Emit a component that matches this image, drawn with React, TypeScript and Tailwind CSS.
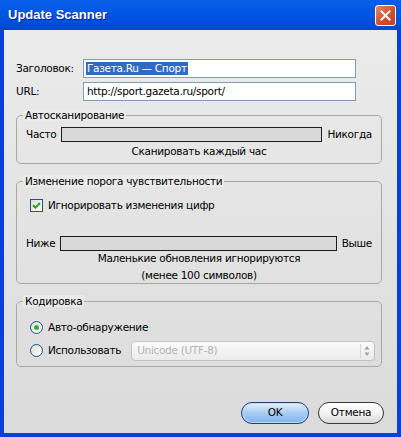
import React from "react";

const font = { fontFamily: '"DejaVu Sans", "Liberation Sans", sans-serif' };

function Slider({ className }: { className: string }) {
  return <div className={"h-[15px] border border-[#1e1e1e] bg-[#d9d9d9] " + className} />;
}

function Group({ title, children, className }: { title: string; children: React.ReactNode; className?: string }) {
  return (
    <fieldset className={"mx-[12px] mr-[15px] rounded-[5px] border border-[#a9a9a4] " + (className || "")}>
      <legend className="ml-[6px] bg-[#ebebeb] px-[2px] leading-[12px]">{title}</legend>
      {children}
    </fieldset>
  );
}

export default function App() {
  return (
    <div
      className="flex h-[437px] w-[401px] flex-col overflow-hidden bg-[#0840d8] text-[10.5px] tracking-[-0.3px] text-black"
      style={font}
    >
      {/* Title bar */}
      <div className="flex h-[30px] items-center justify-between bg-gradient-to-b from-[#0a5ee8] via-[#0055e5] to-[#0046d0] pl-[8px] pr-[5px]">
        <span
          className="text-[13px] font-bold tracking-normal text-white"
          style={{ fontFamily: '"Liberation Sans", sans-serif', textShadow: "1px 1px 0 #0a1e8a" }}
        >
          Update Scanner
        </span>
        <div className="mt-[1px] flex h-[21px] w-[21px] items-center justify-center rounded-[3px] border border-white bg-gradient-to-br from-[#e9876a] via-[#d9502f] to-[#c23e1f]">
          <svg width="11" height="11" viewBox="0 0 11 11">
            <path d="M1.5 1.5 L9.5 9.5 M9.5 1.5 L1.5 9.5" stroke="white" strokeWidth="2" strokeLinecap="square" />
          </svg>
        </div>
      </div>

      {/* Body */}
      <div className="mx-[4px] mb-[4px] flex flex-1 flex-col bg-gradient-to-b from-[#ebebeb] to-[#dcdbdb] pt-[29px]">
        <div className="flex items-center">
          <span className="w-[79px] pl-[12px]">Заголовок:</span>
          <div className="flex h-[19px] w-[273px] items-center border border-[#7f9db9] bg-white pl-[2px]">
            <span className="bg-[#316ac5] px-[1px] text-white leading-[13px]">Газета.Ru — Спорт</span>
          </div>
        </div>
        <div className="mt-[4px] flex items-center">
          <span className="w-[79px] pl-[12px]">URL:</span>
          <div className="flex h-[19px] w-[273px] items-center border border-[#7f9db9] bg-white pl-[3px]">
            http://sport.gazeta.ru/sport/
          </div>
        </div>

        <Group title="Автосканирование" className="mt-[8px] h-[55px]">
          <div className="flex items-center pl-[9px] pr-[9px] pt-[6px]">
            <span>Часто</span>
            <Slider className="ml-[5px] flex-1" />
            <span className="ml-[5px]">Никогда</span>
          </div>
          <div className="mt-[1px] text-center">Сканировать каждый час</div>
        </Group>

        <Group title="Изменение порога чувствительности" className="mt-[11px] h-[109px]">
          <div className="flex items-center pl-[13px] pt-[11px]">
            <div className="flex h-[13px] w-[13px] items-center justify-center border border-[#1c5180] bg-gradient-to-br from-[#dcdcd7] to-white">
              <svg width="9" height="9" viewBox="0 0 9 9">
                <path d="M1 4.2 L3.4 6.6 L8 2" stroke="#21a121" strokeWidth="2" fill="none" />
              </svg>
            </div>
            <span className="ml-[5px]">Игнорировать изменения цифр</span>
          </div>
          <div className="mt-[22px] flex items-center pl-[9px] pr-[9px]">
            <span>Ниже</span>
            <Slider className="ml-[5px] flex-1" />
            <span className="ml-[5px]">Выше</span>
          </div>
          <div className="-mt-[2px] text-center leading-[17px]">Маленькие обновления игнорируются</div>
          <div className="text-center leading-[17px]">(менее 100 символов)</div>
        </Group>

        <Group title="Кодировка" className="mt-[11px] h-[72px]">
          <div className="flex items-center pl-[13px] pt-[13px]">
            <div className="flex h-[13px] w-[13px] items-center justify-center rounded-full border border-[#1c5180] bg-gradient-to-br from-[#dcdcd7] to-white">
              <div className="h-[5px] w-[5px] rounded-full bg-[#2fb52f]" />
            </div>
            <span className="ml-[5px]">Авто-обнаружение</span>
          </div>
          <div className="mt-[5px] flex items-center pl-[13px] pr-[6px]">
            <div className="h-[13px] w-[13px] rounded-full border border-[#1c5180] bg-gradient-to-br from-[#dcdcd7] to-white" />
            <span className="ml-[5px]">Использовать</span>
            <div className="ml-[10px] flex h-[20px] flex-1 items-center justify-between rounded-[4px] border border-[#c3c3c3] bg-gradient-to-b from-[#fbfbfb] to-[#ebebeb] pl-[5px] pr-[4px] text-[#b4b4b4]">
              <span>Unicode (UTF-8)</span>
              <div className="flex h-[14px] w-[10px] flex-col items-center justify-center border-l border-[#d8d8d8] pl-[2px]">
                <svg width="6" height="12" viewBox="0 0 6 12">
                  <path d="M3 1 L5.5 4.5 L0.5 4.5 Z M3 11 L5.5 7.5 L0.5 7.5 Z" fill="#a0a0a0" />
                </svg>
              </div>
            </div>
          </div>
        </Group>

        <div className="mt-[35px] flex justify-end gap-[9px] pr-[13px]">
          <button className="h-[22px] w-[68px] rounded-full border border-[#1c3f7a] bg-gradient-to-b from-[#e6f1fc] via-[#a9cdf3] to-[#7eb3ea] shadow-[inset_0_0_0_1px_#bfe0ff]">
            OK
          </button>
          <button className="h-[22px] w-[66px] rounded-full border border-[#3a3a3a] bg-gradient-to-b from-white via-[#f4f4f4] to-[#d8d8d8]">
            Отмена
          </button>
        </div>
      </div>
    </div>
  );
}
